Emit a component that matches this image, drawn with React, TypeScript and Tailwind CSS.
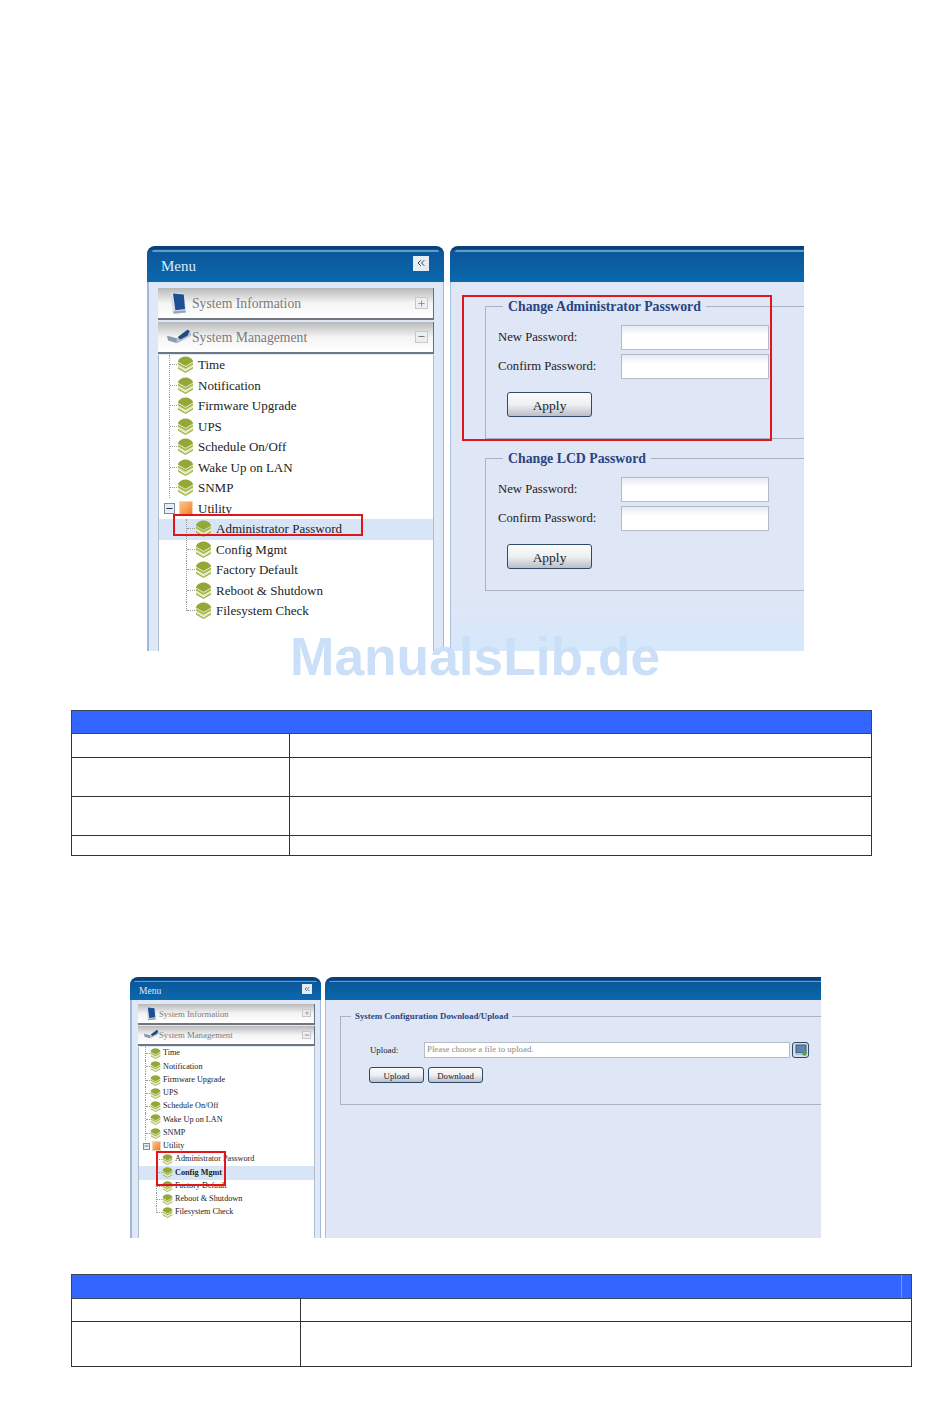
import React from 'react';
import { ChevronsLeft, Minus, Plus } from 'lucide-react';

type Size = 'lg' | 'sm';

const sizes = {
    lg: {
        menu: 'w-[297px]',
        headerH: 'h-[36px]',
        menuTitle: 'text-[15px] pl-[14px] pb-[1px]',
        highlight: 'h-[2px] mt-[1px] mx-[5px]',
        collapse: 'w-[16px] h-[15px] mr-[15px] mt-[-7px]',
        collapseIcon: 12,
        body: 'pt-[6px] pl-[9px] pr-[9px]',
        acc: 'h-[32px] mb-[1.5px] text-[13.7px] pr-[5px] border-b-[2px]',
        accTitle: 'pt-[3px]',
        accIcon: 'w-[34px] pl-[9px]',
        accIconSize: 24,
        sign: 'w-[13px] h-[12px]',
        signIcon: 9,
        row: 'h-[20.5px] text-[13px] pb-[1px]',
        l1: 'pl-[10px]',
        l2: 'pl-[27px]',
        stubL1: 'w-[7px]',
        stubL2: 'w-[8px]',
        iconSize: 17,
        gap: 'gap-[4px]',
        utilBox: 'w-[11px] h-[11px] ml-[5px] mr-[4px]',
        utilIconBox: 'w-[14px] h-[15px] mr-[5px]',
    },
    sm: {
        menu: 'w-[191px]',
        headerH: 'h-[23px]',
        menuTitle: 'text-[9.5px] pl-[9px]',
        highlight: 'h-[1px] mt-[1px] mx-[4px]',
        collapse: 'w-[10px] h-[10px] mr-[9px] mt-[-5px]',
        collapseIcon: 8,
        body: 'pt-[4px] pl-[6px] pr-[5px]',
        acc: 'h-[20.5px] mb-[1px] text-[8.75px] pr-[3px] border-b-[2px]',
        accTitle: 'pt-[2px]',
        accIcon: 'w-[21px] pl-[6px]',
        accIconSize: 15,
        sign: 'w-[9px] h-[8px]',
        signIcon: 6,
        row: 'h-[13.25px] text-[8.2px]',
        l1: 'pl-[6px]',
        l2: 'pl-[17px]',
        stubL1: 'w-[4px]',
        stubL2: 'w-[5px]',
        iconSize: 11,
        gap: 'gap-[2px]',
        utilBox: 'w-[7px] h-[7px] ml-[4px] mr-[2px]',
        utilIconBox: 'w-[9px] h-[10px] mr-[2px]',
    },
};

const LayerIcon = ({ size }: { size: number }) => (
    <svg width={size} height={size} viewBox="0 0 16 16" className="shrink-0">
        <path d="M1 10l7 4.500 7-4.500v2l-7 4-7-4z" fill="#a3b64a" />
        <path d="M1 7l7 4 7-4v3l-7 4-7-4z" fill="#e4ebc0" />
        <path d="M1 6l7 4 7-4v2l-7 4-7-4z" fill="#a3b64a" />
        <path d="M8 .5c3 0 6 1.500 7 4v1l-7 4-7-4v-1C2 2 5 .5 8 .5z" fill="#93a836" />
    </svg>
);

const InfoIcon = ({ size }: { size: number }) => (
    <svg width={size} height={size} viewBox="0 0 20 20" className="shrink-0">
        <path d="M3 1l11 1 2 15-11 2z" fill="#d8dde6" />
        <path d="M5 2l9 1 1 12-8 1z" fill="#1d4f93" />
        <path d="M5 17l10-1 1 2-10 1z" fill="#9aa6b8" />
    </svg>
);

const ManageIcon = ({ size }: { size: number }) => (
    <svg width={size} height={size} viewBox="0 0 20 20" className="shrink-0">
        <path d="M0 9l8 2 12-5v3L9 15l-8-2z" fill="#b6c0cf" />
        <path d="M9 10l8-6 2 1-2 4-6 3z" fill="#1e4a80" />
        <path d="M0 9l8 2v4l-7-2z" fill="#8d99ad" />
    </svg>
);

const AccordionHead = ({ size, title, open }: { size: Size; title: string; open: boolean }) => {
    const s = sizes[size];
    return (
        <div className={`flex items-center bg-linear-to-b from-[#b9b9b9] via-[#f4f4f4] to-white border-r border-[#5e6f88] border-b-[#6f7680] text-[#7a7a7a] ${s.acc}`}>
            <span className={`flex items-center shrink-0 ${s.accIcon}`}>
                {open ? <ManageIcon size={s.accIconSize} /> : <InfoIcon size={s.accIconSize} />}
            </span>
            <span className={`flex-1 ${s.accTitle}`}>{title}</span>
            <span className={`flex items-center justify-center bg-[#eceef0] border border-[#c8c8c8] text-[#777] ${s.sign}`}>
                {open ? <Minus size={s.signIcon} strokeWidth={3} /> : <Plus size={s.signIcon} strokeWidth={2} />}
            </span>
        </div>
    );
};

const TreeRow = ({ size, label, level, selected, strong, last }: { size: Size; label: string; level: 1 | 2; selected?: boolean; strong?: boolean; last?: boolean }) => {
    const s = sizes[size];
    return (
        <div className={`flex items-center whitespace-nowrap text-[#222] ${s.row} ${level === 1 ? s.l1 : s.l2} ${selected ? 'bg-[#d8e5f6]' : ''} ${strong ? 'font-bold' : ''}`}>
            <span className={`shrink-0 w-0 border-l border-dotted border-[#9a9a9a] ${last ? 'self-start h-1/2' : 'self-stretch'}`} />
            <span className={`shrink-0 border-t border-dotted border-[#9a9a9a] ${level === 1 ? s.stubL1 : s.stubL2}`} />
            <span className={`flex items-center ${s.gap}`}>
                <LayerIcon size={s.iconSize} />
                {label}
            </span>
        </div>
    );
};

const Menu = ({ size, selected }: { size: Size; selected: string }) => {
    const s = sizes[size];
    return (
        <div className={`flex flex-col shrink-0 overflow-hidden ${s.menu}`}>
            <div className={`shrink-0 flex flex-col rounded-t-lg border-t-[3px] border-[#0b3f78] bg-linear-to-b from-[#0b5597] to-[#0a69ae] text-[#d9ecfb] ${s.headerH}`}>
                <div className={`shrink-0 rounded-t-sm bg-[#5b9ed3] ${s.highlight}`} />
                <div className={`flex-1 flex items-center justify-between ${s.menuTitle}`}>
                    <span>Menu</span>
                    <span className={`flex items-center justify-center bg-[#e6edf2] text-[#345] ${s.collapse}`}>
                        <ChevronsLeft size={s.collapseIcon} />
                    </span>
                </div>
            </div>
            <div className={`flex-1 flex flex-col bg-[#dfe8f6] border-l-[2px] border-r border-l-[#9fb9da] border-r-[#9fb9da] ${s.body}`}>
                <AccordionHead size={size} title="System Information" open={false} />
                <AccordionHead size={size} title="System Management" open />
                <div className="flex-1 bg-white border-l border-r border-[#aebccf]">
                    {['Time', 'Notification', 'Firmware Upgrade', 'UPS', 'Schedule On/Off', 'Wake Up on LAN', 'SNMP'].map((label) => (
                        <TreeRow key={label} size={size} label={label} level={1} />
                    ))}
                    <div className={`flex items-center text-[#222] ${s.row}`}>
                        <span className={`flex items-center justify-center shrink-0 border border-[#7f8c9c] bg-[#e8eef5] text-[#234] ${s.utilBox}`}>
                            <Minus size={s.signIcon} strokeWidth={3} />
                        </span>
                        <span className={`shrink-0 bg-linear-to-br from-[#fbc38a] to-[#f07a12] border border-[#f3d3b0] ${s.utilIconBox}`} />
                        Utility
                    </div>
                    {['Administrator Password', 'Config Mgmt', 'Factory Default', 'Reboot & Shutdown', 'Filesystem Check'].map((label) => (
                        <TreeRow key={label} size={size} label={label} level={2} selected={label === selected} strong={size === 'sm' && label === selected} last={label === 'Filesystem Check'} />
                    ))}
                </div>
            </div>
        </div>
    );
};

const ContentHeader = ({ size }: { size: Size }) => {
    const s = sizes[size];
    return (
        <div className={`shrink-0 rounded-tl-lg border-t-[3px] border-[#0b3f78] bg-linear-to-b from-[#0b5597] to-[#0a69ae] ${s.headerH}`}>
            <div className={`rounded-tl-sm bg-[#5b9ed3] ${s.highlight} mr-0`} />
        </div>
    );
};

const Button = ({ label, className }: { label: string; className: string }) => (
    <button className={`block rounded-[3px] border border-[#2f4a68] bg-linear-to-b from-[#fbfbfb] via-[#eef0f3] to-[#b9bec8] text-[#222] ${className}`}>
        {label}
    </button>
);

const PasswordFieldset = ({ title }: { title: string }) => (
    <fieldset className="h-[141px] w-[400px] ml-[34px] mb-[11px] pl-[12px] pt-[11px] border border-[#a9b2c4]">
        <legend className="ml-[5px] px-[5px] pt-[1px] h-[16px] leading-[16px] text-[13.8px] font-bold text-[#2a4480] whitespace-nowrap">{title}</legend>
        {['New Password:', 'Confirm Password:'].map((label) => (
            <div key={label} className="flex items-center h-[25px] mb-[4px] text-[12.7px] text-[#222]">
                <span className="w-[123px] shrink-0">{label}</span>
                <span className="w-[148px] h-full bg-linear-to-b from-[#e9edf3] from-5% to-white to-40% border border-[#b4bac6]" />
            </div>
        ))}
        <Button label="Apply" className="w-[85px] h-[25px] ml-[9px] mt-[13px] pt-[3px] text-[13.5px]" />
    </fieldset>
);

const RedBox = ({ className }: { className: string }) => (
    <div className={`absolute border-2 border-[#e0161c] ${className}`} />
);

const FirstShot = () => (
    <div className="relative flex gap-[6px] w-[657px] h-[405px] ml-[147px]">
        <Menu size="lg" selected="Administrator Password" />
        <div className="flex-1 flex flex-col overflow-hidden">
            <ContentHeader size="lg" />
            <div className="flex-1 pt-[16px] bg-linear-to-b from-[#dfe6f5] from-85% to-[#d6e8fb] border-l border-[#aac0dc]">
                <PasswordFieldset title="Change Administrator Password" />
                <PasswordFieldset title="Change LCD Password" />
            </div>
        </div>
        <RedBox className="left-[315px] top-[49px] w-[310px] h-[146px]" />
        <RedBox className="left-[26px] top-[268px] w-[190px] h-[22px]" />
    </div>
);

const SecondShot = () => (
    <div className="relative flex gap-[4px] w-[691px] h-[261px] ml-[130px]">
        <Menu size="sm" selected="Config Mgmt" />
        <div className="flex-1 flex flex-col overflow-hidden">
            <ContentHeader size="sm" />
            <div className="flex-1 pt-[10px] bg-[#dfe6f5] border-l border-[#aac0dc]">
                <fieldset className="h-[95px] w-[520px] ml-[14px] border border-[#a9b2c4]">
                    <legend className="ml-[10px] px-[4px] h-[12px] leading-[12px] text-[8.85px] font-bold text-[#2a4480] whitespace-nowrap">System Configuration Download/Upload</legend>
                    <div className="pl-[28px] pt-[20px]">
                        <div className="flex items-center h-[16px] text-[8.8px] text-[#222]">
                            <span className="w-[55px] shrink-0 pl-[1px] pt-[1px]">Upload:</span>
                            <span className="w-[366px] h-full flex items-center pl-[2px] bg-white border border-[#b4bac6] text-[#8b8b8b]">Please choose a file to upload.</span>
                            <span className="flex items-center justify-center w-[17px] h-full ml-[2px] rounded-[3px] border border-[#2f4a68] bg-[#d8dee8]">
                                <svg width="12" height="12" viewBox="0 0 12 12">
                                    <rect x="1" y="1" width="10" height="8" fill="#5f86b3" stroke="#44586f" />
                                    <rect x="1" y="9" width="10" height="2" fill="#b8c0c9" />
                                    <circle cx="9.500" cy="9.500" r="2.200" fill="#4ea54a" />
                                </svg>
                            </span>
                        </div>
                        <div className="flex gap-[4px] mt-[9px]">
                            <Button label="Upload" className="w-[55px] h-[16px] pt-[2px] text-[8.8px]" />
                            <Button label="Download" className="w-[55px] h-[16px] pt-[2px] text-[8.8px]" />
                        </div>
                    </div>
                </fieldset>
            </div>
        </div>
        <RedBox className="left-[26px] top-[174px] w-[70px] h-[35px]" />
    </div>
);

const BlankTable = ({ className, firstCol, rows, headerH, notch }: { className: string; firstCol: string; rows: string[]; headerH: string; notch?: boolean }) => (
    <table className={`table-fixed border-collapse ${className}`}>
        <colgroup>
            <col className={firstCol} />
            <col />
        </colgroup>
        <tbody>
            <tr>
                <td colSpan={2} className={`p-0 bg-[#3366ff] border border-[#3b4560] ${headerH}`}>
                    {notch && <div className="ml-auto w-[10px] h-full border-l border-[#6f95ff]" />}
                </td>
            </tr>
            {rows.map((height, index) => (
                <tr key={index} className={height}>
                    <td className="p-0 border border-[#333]" />
                    <td className="p-0 border border-[#333]" />
                </tr>
            ))}
        </tbody>
    </table>
);

const App: React.FC = () => {
    return (
        <div className="relative w-[950px] h-[1420px] bg-white overflow-hidden pt-[246px] font-['Liberation_Serif',serif]">
            <FirstShot />
            <div className="mt-[59px] ml-[71px]">
                <BlankTable className="w-[801px]" firstCol="w-[218px]" headerH="h-[23px]" rows={['h-[24px]', 'h-[39px]', 'h-[39px]', 'h-[20px]']} />
            </div>
            <div className="mt-[121px]">
                <SecondShot />
            </div>
            <div className="mt-[36px] ml-[71px]">
                <BlankTable className="w-[841px]" firstCol="w-[229px]" headerH="h-[24px]" rows={['h-[23px]', 'h-[45px]']} notch />
            </div>
            <div className="absolute left-[290px] top-[622px] text-[53.3px] leading-[70px] font-bold text-[#cbe0f8] font-['Liberation_Sans',sans-serif] whitespace-nowrap">
                ManualsLib.de
            </div>
        </div>
    );
};

export default App;
